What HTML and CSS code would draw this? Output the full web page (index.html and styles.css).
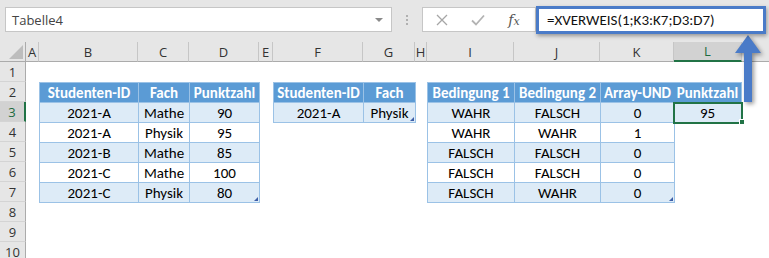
FILE: index.html
```html
<!DOCTYPE html>
<html lang="de">
<head>
    <meta charset="UTF-8">
    <meta name="viewport" content="width=device-width, initial-scale=1.0">
    <title>Tabelle4</title>
    <link rel="stylesheet" href="styles.css">
</head>
<body>
    <div class="app">
        <div class="formula-row">
            <div class="name-box">
                <span>Tabelle4</span>
                <span class="caret"></span>
            </div>
            <div class="grip"><i></i><i></i><i></i></div>
            <div class="fx-buttons">
                <svg width="12" height="12" viewBox="0 0 12 12"><path d="M1 1L11 11M11 1L1 11" stroke="#a6a6a6" stroke-width="1.3" fill="none"/></svg>
                <svg width="14" height="12" viewBox="0 0 14 12"><path d="M1 6.5L5 10.5L13 1.5" stroke="#b3b3b3" stroke-width="1.8" fill="none"/></svg>
                <span class="fx">f<small>x</small></span>
            </div>
            <div class="formula">=XVERWEIS(1;K3:K7;D3:D7)</div>
        </div>

        <div class="sheet">
            <div class="corner"><span></span></div>
            <div class="col-head">A</div>
            <div class="col-head">B</div>
            <div class="col-head">C</div>
            <div class="col-head">D</div>
            <div class="col-head">E</div>
            <div class="col-head">F</div>
            <div class="col-head">G</div>
            <div class="col-head">H</div>
            <div class="col-head">I</div>
            <div class="col-head">J</div>
            <div class="col-head">K</div>
            <div class="col-head active">L</div>
            <div class="col-head last"></div>

            <div class="row-head">1</div>
            <div class="row-head">2</div>
            <div class="row-head active">3</div>
            <div class="row-head">4</div>
            <div class="row-head">5</div>
            <div class="row-head">6</div>
            <div class="row-head">7</div>
            <div class="row-head">8</div>
            <div class="row-head">9</div>
            <div class="row-head">10</div>

            <!-- B2:D7 -->
            <table class="xl-table t-scores">
                <colgroup><col style="width:99px"><col style="width:51px"><col style="width:70px"></colgroup>
                <thead><tr><th>Studenten-ID</th><th>Fach</th><th>Punktzahl</th></tr></thead>
                <tbody>
                    <tr><td>2021-A</td><td>Mathe</td><td>90</td></tr>
                    <tr><td>2021-A</td><td>Physik</td><td>95</td></tr>
                    <tr><td>2021-B</td><td>Mathe</td><td>85</td></tr>
                    <tr><td>2021-C</td><td>Mathe</td><td>100</td></tr>
                    <tr><td>2021-C</td><td>Physik</td><td class="end">80<span class="resize"></span></td></tr>
                </tbody>
            </table>

            <!-- F2:G3 -->
            <table class="xl-table t-lookup">
                <colgroup><col style="width:90px"><col style="width:52px"></colgroup>
                <thead><tr><th>Studenten-ID</th><th>Fach</th></tr></thead>
                <tbody>
                    <tr><td>2021-A</td><td class="end">Physik<span class="resize"></span></td></tr>
                </tbody>
            </table>

            <!-- I2:K7 -->
            <table class="xl-table t-conditions">
                <colgroup><col style="width:87px"><col style="width:86px"><col style="width:74px"></colgroup>
                <thead><tr><th>Bedingung 1</th><th>Bedingung 2</th><th>Array-UND</th></tr></thead>
                <tbody>
                    <tr><td>WAHR</td><td>FALSCH</td><td>0</td></tr>
                    <tr><td>WAHR</td><td>WAHR</td><td>1</td></tr>
                    <tr><td>FALSCH</td><td>FALSCH</td><td>0</td></tr>
                    <tr><td>FALSCH</td><td>FALSCH</td><td>0</td></tr>
                    <tr><td>FALSCH</td><td>WAHR</td><td class="end">0<span class="resize"></span></td></tr>
                </tbody>
            </table>

            <!-- L2:L3 -->
            <table class="xl-table t-result">
                <thead><tr><th>Punktzahl</th></tr></thead>
                <tbody>
                    <tr><td class="selected">95<span class="fill-handle"></span></td></tr>
                </tbody>
            </table>
        </div>

        <svg class="callout-arrow" width="40" height="76" viewBox="0 0 40 76">
            <path d="M20 5L33 23H24V72H16V23H7Z" fill="#4a7bc8"/>
        </svg>
    </div>
</body>
</html>
```

FILE: styles.css
```css
* {
    box-sizing: border-box;
}

body {
    margin: 0;
    background: #ffffff;
    font-family: 'Segoe UI', 'Open Sans', sans-serif;
    overflow: hidden;
}

.app {
    position: relative;
    width: 769px;
    height: 258px;
    overflow: hidden;
}

/* name box + formula bar */
.formula-row {
    display: flex;
    align-items: center;
    height: 42px;
    padding: 0 0 3px 5px;
    background: #e6e6e6;
}

.name-box {
    display: flex;
    align-items: center;
    justify-content: space-between;
    width: 387px;
    height: 25px;
    padding: 0 8px 0 6px;
    background: #ffffff;
    border: 1px solid #c6c6c6;
    font-size: 13px;
    color: #444444;
}

.caret {
    width: 0;
    height: 0;
    border-top: 4px solid #8a8a8a;
    border-left: 4px solid transparent;
    border-right: 4px solid transparent;
}

.grip {
    display: flex;
    flex-direction: column;
    align-items: center;
    gap: 2px;
    width: 30px;
}

.grip i {
    width: 2px;
    height: 2px;
    background: #b0b0b0;
}

.fx-buttons {
    display: grid;
    grid-template-columns: repeat(3, 36px);
    justify-items: center;
    align-items: center;
    width: 114px;
    height: 25px;
    padding-left: 1px;
    background: #ffffff;
    border: 1px solid #c6c6c6;
}

.fx {
    font-family: 'DejaVu Serif', 'Liberation Serif', serif;
    font-style: italic;
    font-size: 14px;
    color: #555555;
}

.fx small {
    font-size: 11px;
}

.formula {
    display: flex;
    align-items: center;
    width: 230px;
    height: 28px;
    padding-left: 8px;
    background: #ffffff;
    border: 3px solid #4a7bc8;
    box-shadow: 1px 2px 4px rgba(0, 0, 0, 0.35);
    font-family: Calibri, Carlito, Lato, sans-serif;
    font-size: 15px;
    color: #111111;
    z-index: 1;
}

/* worksheet grid */
.sheet {
    display: grid;
    grid-template-columns: 26px 13px 99px 51px 70px 14px 90px 52px 12px 87px 86px 74px 68px 1fr;
    grid-template-rows: repeat(11, 20px);
    background: #ffffff;
}

.corner,
.col-head,
.row-head {
    background: #e6e6e6;
    color: #333333;
    font-size: 13px;
}

.corner {
    display: flex;
    align-items: flex-end;
    justify-content: flex-end;
    padding: 0 2px 2px 0;
    border-right: 1px solid #ababab;
    border-bottom: 1px solid #ababab;
}

.corner span {
    width: 14px;
    height: 14px;
    background: #bdbdbd;
    clip-path: polygon(100% 0, 100% 100%, 0 100%);
}

.col-head {
    display: flex;
    align-items: center;
    justify-content: center;
    border-right: 1px solid #c6c6c6;
    border-bottom: 1px solid #ababab;
}

.col-head.last {
    border-right: 0;
}

.col-head.active {
    background: #d2d2d2;
    color: #1e6b40;
    border-bottom: 2px solid #217346;
}

.row-head {
    grid-column: 1;
    display: flex;
    align-items: center;
    justify-content: center;
    border-right: 1px solid #ababab;
    border-bottom: 1px solid #d4d4d4;
}

.row-head.active {
    background: #d2d2d2;
    color: #1e6b40;
    border-right: 2px solid #217346;
}

/* excel tables */
.xl-table {
    align-self: start;
    width: 100%;
    border-collapse: collapse;
    table-layout: fixed;
    font-family: Calibri, Carlito, Lato, sans-serif;
    font-size: 15px;
    color: #000000;
}

.xl-table th,
.xl-table td {
    height: 20px;
    padding: 0 2px;
    border: 1px solid #9bc2e6;
    text-align: center;
    white-space: nowrap;
    line-height: 18px;
}

.xl-table th {
    background: #5b9bd5;
    color: #ffffff;
    font-weight: bold;
}

.xl-table tbody tr:nth-child(odd) td {
    background: #ddebf7;
}

.t-scores {
    grid-column: 3 / 6;
    grid-row: 3 / 9;
}

.t-lookup {
    grid-column: 7 / 9;
    grid-row: 3 / 5;
}

.t-conditions {
    grid-column: 10 / 13;
    grid-row: 3 / 9;
}

.t-result {
    grid-column: 13 / 14;
    grid-row: 3 / 5;
}

.t-result th,
.t-result td {
    border-left: 0;
}

.end,
.selected {
    position: relative;
}

.resize {
    position: absolute;
    right: 1px;
    bottom: 1px;
    width: 4px;
    height: 4px;
    background: #3d5ea8;
    clip-path: polygon(100% 0, 100% 100%, 0 100%);
}

.xl-table td.selected {
    outline: 2px solid #217346;
    outline-offset: -1px;
}

.fill-handle {
    position: absolute;
    right: -4px;
    bottom: -3px;
    width: 6px;
    height: 6px;
    background: #217346;
    border: 1px solid #ffffff;
}

/* annotation arrow pointing from L3 up to the formula */
.callout-arrow {
    position: absolute;
    left: 728px;
    top: 30px;
    filter: drop-shadow(2px 2px 2px rgba(0, 0, 0, 0.4));
}
```
